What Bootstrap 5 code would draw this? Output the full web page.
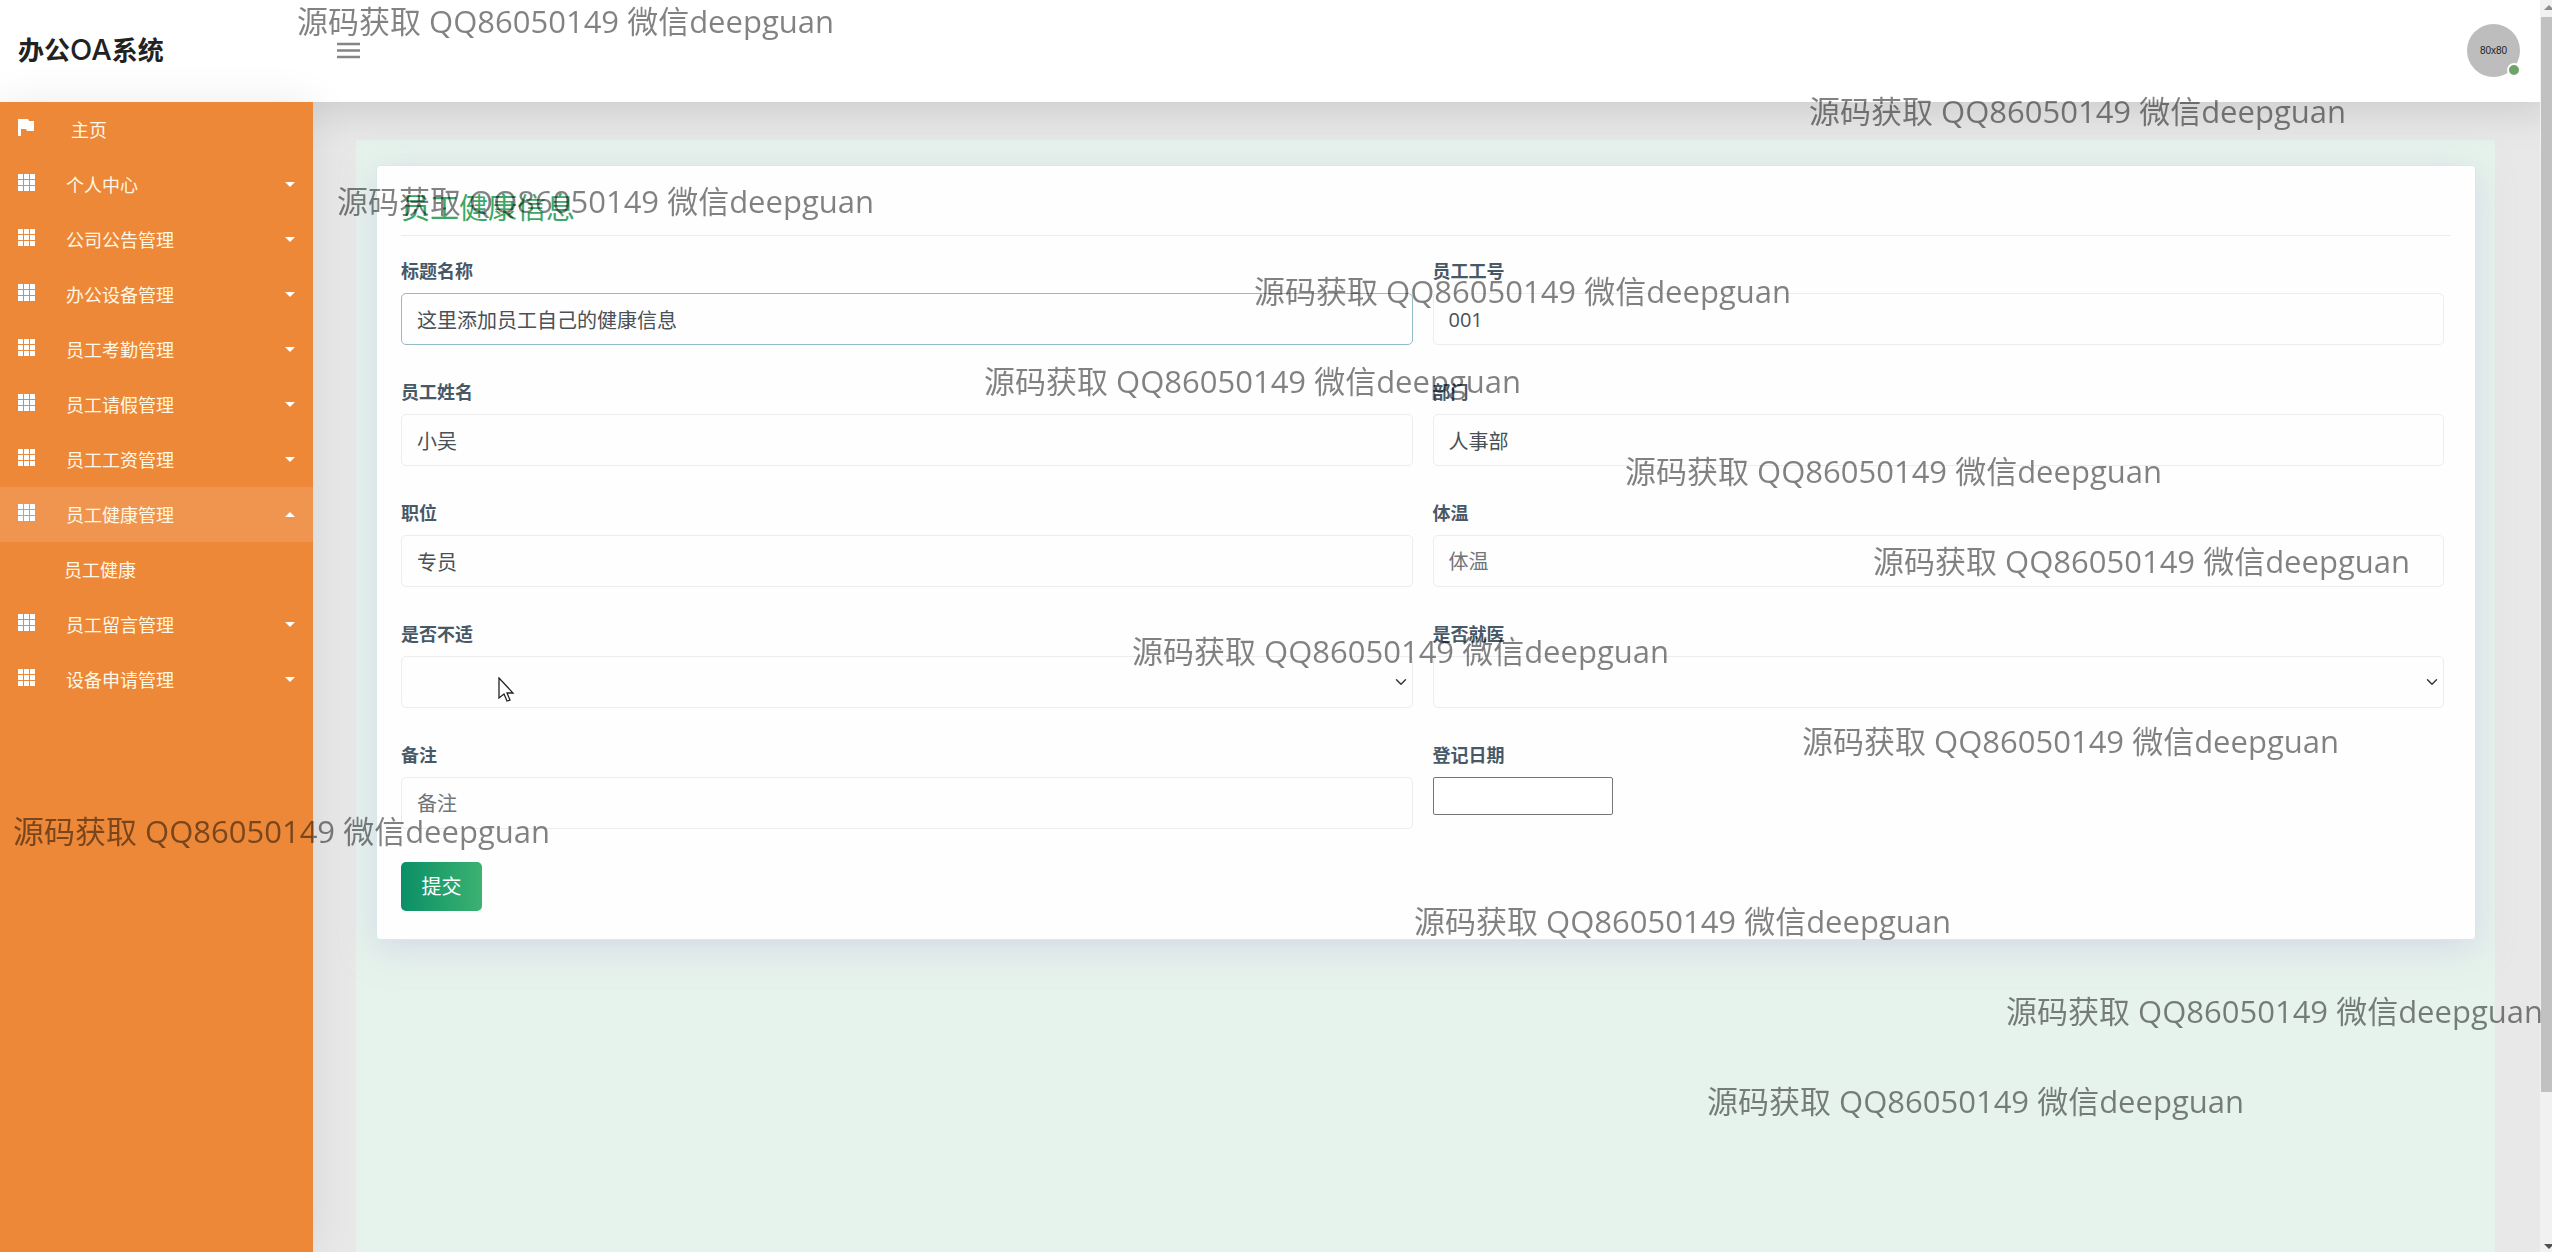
<!DOCTYPE html>
<html lang="zh-CN">
<head>
<meta charset="utf-8">
<meta name="viewport" content="width=device-width, initial-scale=1">
<title>办公OA系统</title>
<link rel="stylesheet" href="https://cdn.jsdelivr.net/npm/bootstrap@5.3.0/dist/css/bootstrap.min.css">
<style>
body { font-family: "Open Sans", "Noto Sans CJK SC", sans-serif; font-size: 18px; background: #e8e8e8; overflow: hidden; }
.topbar { height: 102px; padding: 0 32px 2px 18px; box-shadow: 0 10px 40px rgba(0,0,0,.12); z-index: 2; }
.brand { width: 319px; font-size: 26px; font-weight: 700; line-height: 40px; color: #222; text-decoration: none; }
.brand span { font-family: Inter, sans-serif; font-weight: 500; font-size: 29px; }
.menu-toggle { width: 23px; height: 24px; color: #858585; }
.avatar { width: 53px; height: 53px; background: #bdbdbd; font: 10px "Liberation Sans", sans-serif; color: #222; }
.online { width: 14px; height: 14px; right: -1px; bottom: 0; background: #6da467; border: 2px solid #fff; }
.sidebar { width: 313px; background: #ec8838; box-shadow: 0 0 40px rgba(0,0,0,.08); z-index: 3; }
.sidebar a { height: 55px; padding: 0 18px; color: #fff8e6; text-decoration: none; line-height: 28px; }
.sidebar svg { width: 17px; height: 17px; color: #fff; margin-bottom: 4px; }
.sidebar .item-text { margin-left: 31px; }
.sidebar .home-text { margin-left: 36px; }
.sidebar .current { background: #ef954f; }
.sidebar .sub-link { padding-left: 64px; }
.sidebar .dropdown-toggle::after { margin-left: auto; border-style: solid; border-width: 5px 5px 0; border-color: #fff transparent; }
.sidebar .current::after { border-width: 0 5px 5px; }
.shell { height: calc(100vh - 102px); }
.page-area { padding: 38px 57px 0 43px; }
.pane { min-height: 1130px; padding: 25px 19px 25px 20px; background: #e6f3ec; }
.panel { padding: 26px 25px 28px 24px; border: 1px solid #d9e9ea; border-radius: 4px; background: #fefefe; box-shadow: 0 8px 34px rgba(196,192,225,.5); }
.panel-title { margin: 0 0 22px; padding-bottom: 11px; font-size: 29px; line-height: 32px; font-weight: 400; color: #3ba869; border-bottom: 1px solid #e9ecec; }
.entry { padding-right: 6px; }
.fields { --bs-gutter-x: 20px; --bs-gutter-y: 34px; }
.entry label { display: block; margin-bottom: 9px; line-height: 26px; font-weight: 700; color: #475866; }
.entry .form-control, .entry .form-select { height: 52px; padding: 0 15px; font-size: 20px; color: #495057; border-color: #ebedee; border-radius: 5px; background-color: #fefefe; }
.entry .form-control::placeholder { color: #70757a; }
.entry .form-control.active-field { border-color: #94bbc9; }
.entry .form-select { background-position: right 5px center; background-size: 12px 12px; }
.date-box { display: block; width: 180px; height: 38px; border: 1px solid #767676; border-radius: 2px; background: #fff; }
.submit-btn { width: 81px; height: 49px; padding: 0; margin-top: 33px; font-size: 20px; color: #fff; border: 0; border-radius: 5px; background: linear-gradient(90deg, #0a8f66, #3cb271); }
.scroll-rail { right: 0; width: 12px; z-index: 6; background: #f1f1f1; }
.scroll-rail .thumb { margin: 17px 0 0 1px; height: 1075px; background: #c1c1c1; }
.scroll-rail svg { width: 8px; height: 6px; right: 0; }
.scroll-rail .up { top: 5px; color: #8d8d8d; }
.scroll-rail .down { bottom: 2px; color: #505050; }
.marks { inset: 0; z-index: 8; gap: 48px; font-size: 31px; line-height: 42px; color: rgba(0,0,0,.49); pointer-events: none; white-space: nowrap; }
.marks :nth-child(1) { margin-left: 297px; }
.marks :nth-child(2) { margin-left: 1809px; }
.marks :nth-child(3) { margin-left: 337px; }
.marks :nth-child(4) { margin-left: 1254px; }
.marks :nth-child(5) { margin-left: 984px; }
.marks :nth-child(6) { margin-left: 1625px; }
.marks :nth-child(7) { margin-left: 1873px; }
.marks :nth-child(8) { margin-left: 1132px; }
.marks :nth-child(9) { margin-left: 1802px; }
.marks :nth-child(10) { margin-left: 13px; }
.marks :nth-child(11) { margin-left: 1414px; }
.marks :nth-child(12) { margin-left: 2006px; }
.marks :nth-child(13) { margin-left: 1707px; }
.pointer { left: 498px; top: 677px; width: 17px; height: 26px; z-index: 9; }
</style>
<script src="https://cdn.jsdelivr.net/npm/bootstrap@5.3.0/dist/js/bootstrap.bundle.min.js"></script>
</head>
<body>
<svg class="d-none">
  <symbol id="grid" viewBox="0 0 17 17"><path fill="currentColor" d="M0 0h5v5H0zM6 0h5v5H6zM12 0h5v5h-5zM0 6h5v5H0zM6 6h5v5H6zM12 6h5v5h-5zM0 12h5v5H0zM6 12h5v5H6zM12 12h5v5h-5z"/></symbol>
</svg>

<header class="topbar d-flex align-items-center position-relative bg-white">
  <a class="brand" href="#">办公<span>OA</span>系统</a>
  <button class="menu-toggle btn p-0 border-0 d-flex" type="button" aria-label="菜单">
    <svg width="23" height="24" viewBox="0 0 23 24"><path d="M0 6h23M0 12.500h23M0 19h23" stroke="currentColor" stroke-width="2.600"/></svg>
  </button>
  <div class="avatar rounded-circle position-relative ms-auto d-flex align-items-center justify-content-center">80x80<span class="online position-absolute rounded-circle"></span></div>
</header>

<div class="shell d-flex">
  <nav class="sidebar flex-shrink-0 position-relative">
    <a class="d-flex align-items-center" href="#"><svg viewBox="0 0 17 17"><path fill="currentColor" d="M0 0h10l1 2h5v10H9l-1-2H3v7H0z"/></svg><span class="home-text">主页</span></a>
    <a class="d-flex align-items-center dropdown-toggle" href="#"><svg><use href="#grid"/></svg><span class="item-text">个人中心</span></a>
    <a class="d-flex align-items-center dropdown-toggle" href="#"><svg><use href="#grid"/></svg><span class="item-text">公司公告管理</span></a>
    <a class="d-flex align-items-center dropdown-toggle" href="#"><svg><use href="#grid"/></svg><span class="item-text">办公设备管理</span></a>
    <a class="d-flex align-items-center dropdown-toggle" href="#"><svg><use href="#grid"/></svg><span class="item-text">员工考勤管理</span></a>
    <a class="d-flex align-items-center dropdown-toggle" href="#"><svg><use href="#grid"/></svg><span class="item-text">员工请假管理</span></a>
    <a class="d-flex align-items-center dropdown-toggle" href="#"><svg><use href="#grid"/></svg><span class="item-text">员工工资管理</span></a>
    <a class="d-flex align-items-center dropdown-toggle current" href="#"><svg><use href="#grid"/></svg><span class="item-text">员工健康管理</span></a>
    <a class="d-flex align-items-center sub-link" href="#">员工健康</a>
    <a class="d-flex align-items-center dropdown-toggle" href="#"><svg><use href="#grid"/></svg><span class="item-text">员工留言管理</span></a>
    <a class="d-flex align-items-center dropdown-toggle" href="#"><svg><use href="#grid"/></svg><span class="item-text">设备申请管理</span></a>
  </nav>

  <main class="page-area flex-grow-1">
    <div class="pane">
      <section class="panel">
        <h3 class="panel-title">员工健康信息</h3>
        <form class="entry">
          <div class="row fields">
            <div class="col-6"><label for="f1">标题名称</label><input id="f1" class="form-control active-field" type="text" value="这里添加员工自己的健康信息"></div>
            <div class="col-6"><label for="f2">员工工号</label><input id="f2" class="form-control" type="text" value="001"></div>
            <div class="col-6"><label for="f3">员工姓名</label><input id="f3" class="form-control" type="text" value="小吴"></div>
            <div class="col-6"><label for="f4">部门</label><input id="f4" class="form-control" type="text" value="人事部"></div>
            <div class="col-6"><label for="f5">职位</label><input id="f5" class="form-control" type="text" value="专员"></div>
            <div class="col-6"><label for="f6">体温</label><input id="f6" class="form-control" type="text" placeholder="体温"></div>
            <div class="col-6"><label for="f7">是否不适</label><select id="f7" class="form-select"><option></option></select></div>
            <div class="col-6"><label for="f8">是否就医</label><select id="f8" class="form-select"><option></option></select></div>
            <div class="col-6"><label for="f9">备注</label><input id="f9" class="form-control" type="text" placeholder="备注"></div>
            <div class="col-6"><label for="f10">登记日期</label><input id="f10" class="date-box" type="text"></div>
          </div>
          <button class="btn submit-btn" type="button">提交</button>
        </form>
      </section>
    </div>
  </main>
</div>

<div class="scroll-rail position-fixed top-0 bottom-0">
  <svg class="up position-absolute" viewBox="0 0 8 6"><path d="M0 5l5-5 5 5z" fill="currentColor"/></svg>
  <div class="thumb"></div>
  <svg class="down position-absolute" viewBox="0 0 8 6"><path d="M0 0h10L5 5z" fill="currentColor"/></svg>
</div>

<div class="marks position-fixed d-flex flex-column overflow-hidden">
  <span>源码获取 QQ86050149 微信deepguan</span>
  <span>源码获取 QQ86050149 微信deepguan</span>
  <span>源码获取 QQ86050149 微信deepguan</span>
  <span>源码获取 QQ86050149 微信deepguan</span>
  <span>源码获取 QQ86050149 微信deepguan</span>
  <span>源码获取 QQ86050149 微信deepguan</span>
  <span>源码获取 QQ86050149 微信deepguan</span>
  <span>源码获取 QQ86050149 微信deepguan</span>
  <span>源码获取 QQ86050149 微信deepguan</span>
  <span>源码获取 QQ86050149 微信deepguan</span>
  <span>源码获取 QQ86050149 微信deepguan</span>
  <span>源码获取 QQ86050149 微信deepguan</span>
  <span>源码获取 QQ86050149 微信deepguan</span>
</div>
<svg class="pointer position-fixed" viewBox="0 0 17 26"><path d="M1 1v20l5-4 3 7 3-1-3-7h6z" fill="#fff" stroke="#222" stroke-width="1.300"/></svg>
</body>
</html>
